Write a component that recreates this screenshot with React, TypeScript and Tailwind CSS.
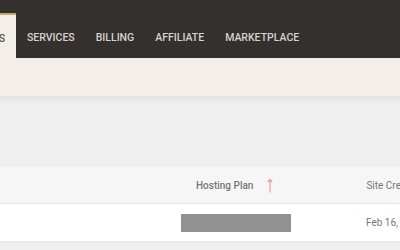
export default function App() {
  const tabs = ['SERVICES', 'BILLING', 'AFFILIATE', 'MARKETPLACE'];

  return (
    <div className="w-[400px] h-[250px] overflow-hidden bg-[#efefef] font-['Roboto',sans-serif] whitespace-nowrap">
      {/* top nav */}
      <div className="h-[58px] bg-[#33302d] flex items-end">
        <div className="h-[45px] w-[16px] shrink-0 bg-[#f3efe8] border-t-2 border-[#c9a86a] flex items-center justify-end pt-[5px] pr-[11px]">
          <span className="text-[10.5px] font-medium text-[#555]">S</span>
        </div>
        <div className="h-[45px] flex items-center pt-[5px] pl-[11px] gap-[21px]">
          {tabs.map((t) => (
            <span key={t} className="shrink-0 text-[10.5px] font-medium text-[#d6d3cf]">
              {t}
            </span>
          ))}
        </div>
      </div>
      <div className="h-[38px] bg-[#f3efe8]" />

      {/* content */}
      <div className="bg-gradient-to-b from-[#e3e3e3] to-[#efefef] h-[8px]" />
      <div className="h-[63px]" />
      <div className="bg-white shadow-[0_1px_2px_rgba(0,0,0,0.06)]">
        <div className="h-[37px] bg-[#f6f6f6] border-b border-[#e6e6e6] flex items-center text-[10px] text-[#777]">
          <div className="w-[196px] shrink-0" />
          <span className="shrink-0 font-medium">Hosting Plan</span>
          <svg className="shrink-0 ml-[14px]" width="6" height="15" viewBox="0 0 6 15">
            <path d="M3 1.5V14.5M0.8 4L3 1.5L5.2 4" fill="none" stroke="#f09a9a" strokeWidth="1.2" />
          </svg>
          <span className="shrink-0 ml-[93px]">Site Created</span>
        </div>
        <div className="h-[37px] flex items-center text-[10px] text-[#777]">
          <div className="w-[181px] shrink-0" />
          <div className="w-[110px] h-[18px] shrink-0 bg-[#919191]" />
          <span className="shrink-0 ml-[75px]">Feb 16, 2023</span>
        </div>
      </div>
    </div>
  );
}
